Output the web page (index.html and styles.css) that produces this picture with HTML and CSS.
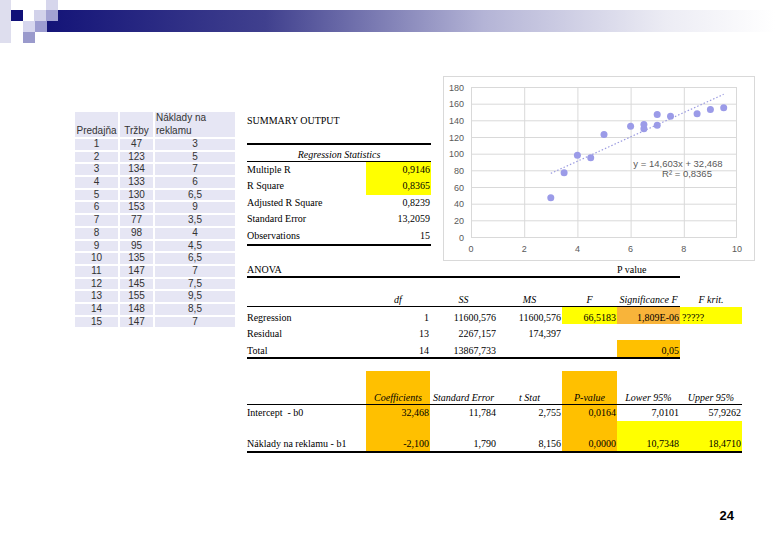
FILE: index.html
```html
<!DOCTYPE html>
<html>
<head>
<meta charset="utf-8">
<link rel="stylesheet" href="styles.css">
</head>
<body>
<svg class="deco" width="780" height="45" viewBox="0 0 780 45">
  <defs>
    <linearGradient id="bar" gradientUnits="userSpaceOnUse" x1="47" y1="0" x2="775" y2="0">
      <stop offset="0" stop-color="#141478"/>
      <stop offset="0.3" stop-color="#40408e"/>
      <stop offset="0.6" stop-color="#b4b4d6"/>
      <stop offset="0.85" stop-color="#ececf4"/>
      <stop offset="1" stop-color="#ffffff"/>
    </linearGradient>
  </defs>
  <rect x="0" y="0" width="11" height="43" fill="#dedeee"/>
  <rect x="47" y="10" width="728" height="22" fill="url(#bar)"/>
  <rect x="11" y="10" width="12" height="11" fill="#101078"/>
  <rect x="34" y="10" width="12" height="11" fill="#d2d2ea"/>
  <rect x="46" y="10" width="12" height="11" fill="#a2a2d2"/>
  <rect x="46" y="0" width="12" height="10" fill="#d6d6ec"/>
  <rect x="23" y="21" width="12" height="11" fill="#d6d6ee"/>
  <rect x="35" y="21" width="12" height="11" fill="#9c9cd0"/>
  <rect x="23" y="32" width="12" height="11" fill="#9a9acc"/>
</svg>

<div class="main">
  <div class="stores">
    <div class="hc">Predajňa</div>
    <div class="hc">Tržby</div>
    <div class="hc hl">Náklady na<br>reklamu</div>
    <div>1</div><div>47</div><div>3</div>
    <div>2</div><div>123</div><div>5</div>
    <div>3</div><div>134</div><div>7</div>
    <div>4</div><div>133</div><div>6</div>
    <div>5</div><div>130</div><div>6,5</div>
    <div>6</div><div>153</div><div>9</div>
    <div>7</div><div>77</div><div>3,5</div>
    <div>8</div><div>98</div><div>4</div>
    <div>9</div><div>95</div><div>4,5</div>
    <div>10</div><div>135</div><div>6,5</div>
    <div>11</div><div>147</div><div>7</div>
    <div>12</div><div>145</div><div>7,5</div>
    <div>13</div><div>155</div><div>9,5</div>
    <div>14</div><div>148</div><div>8,5</div>
    <div>15</div><div>147</div><div>7</div>
  </div>

  <div class="output">
    <div class="top">
      <div class="summary">
        <div class="title">SUMMARY OUTPUT</div>
        <div class="stats">
          <div class="stats-head">Regression Statistics</div>
          <div class="stat-row"><span class="lbl">Multiple R</span><span class="val yellow">0,9146</span></div>
          <div class="stat-row"><span class="lbl">R Square</span><span class="val yellow">0,8365</span></div>
          <div class="stat-row"><span class="lbl">Adjusted R Square</span><span class="val">0,8239</span></div>
          <div class="stat-row"><span class="lbl">Standard Error</span><span class="val">13,2059</span></div>
          <div class="stat-row"><span class="lbl">Observations</span><span class="val">15</span></div>
        </div>
      </div>
      <div class="chart">
        <svg width="312" height="185" viewBox="0 0 312 185">
          <rect x="0.5" y="0.5" width="311" height="184" fill="#fff" stroke="#d9d9d9"/>
          <g stroke="#d9d9d9" stroke-width="1">
            <line x1="28" y1="11.5" x2="294" y2="11.5"/>
            <line x1="28" y1="28.2" x2="294" y2="28.2"/>
            <line x1="28" y1="44.8" x2="294" y2="44.8"/>
            <line x1="28" y1="61.5" x2="294" y2="61.5"/>
            <line x1="28" y1="78.2" x2="294" y2="78.2"/>
            <line x1="28" y1="94.8" x2="294" y2="94.8"/>
            <line x1="28" y1="111.5" x2="294" y2="111.5"/>
            <line x1="28" y1="128.2" x2="294" y2="128.2"/>
            <line x1="28" y1="144.8" x2="294" y2="144.8"/>
            <line x1="28" y1="161.5" x2="294" y2="161.5"/>
            <line x1="28.5" y1="11" x2="28.5" y2="161"/>
            <line x1="81.7" y1="11" x2="81.7" y2="161"/>
            <line x1="134.9" y1="11" x2="134.9" y2="161"/>
            <line x1="188.1" y1="11" x2="188.1" y2="161"/>
            <line x1="241.3" y1="11" x2="241.3" y2="161"/>
            <line x1="293.5" y1="11" x2="293.5" y2="161"/>
          </g>
          <g class="ax" text-anchor="end">
            <text x="21" y="14.5">180</text>
            <text x="21" y="31.2">160</text>
            <text x="21" y="47.8">140</text>
            <text x="21" y="64.5">120</text>
            <text x="21" y="81.2">100</text>
            <text x="21" y="97.8">80</text>
            <text x="21" y="114.5">60</text>
            <text x="21" y="131.2">40</text>
            <text x="21" y="147.8">20</text>
            <text x="21" y="164.5">0</text>
          </g>
          <g class="ax" text-anchor="middle">
            <text x="28" y="175.5">0</text>
            <text x="81.2" y="175.5">2</text>
            <text x="134.4" y="175.5">4</text>
            <text x="187.6" y="175.5">6</text>
            <text x="240.8" y="175.5">8</text>
            <text x="294" y="175.5">10</text>
          </g>
          <g fill="#9b9be8">
            <circle cx="107.8" cy="121.8" r="3.5"/>
            <circle cx="161" cy="58.5" r="3.5"/>
            <circle cx="214.2" cy="49.3" r="3.5"/>
            <circle cx="187.6" cy="50.2" r="3.5"/>
            <circle cx="200.9" cy="52.7" r="3.5"/>
            <circle cx="267.4" cy="33.5" r="3.5"/>
            <circle cx="121.1" cy="96.8" r="3.5"/>
            <circle cx="134.4" cy="79.3" r="3.5"/>
            <circle cx="147.7" cy="81.8" r="3.5"/>
            <circle cx="200.9" cy="48.5" r="3.5"/>
            <circle cx="214.2" cy="38.5" r="3.5"/>
            <circle cx="227.5" cy="40.2" r="3.5"/>
            <circle cx="280.7" cy="31.8" r="3.5"/>
            <circle cx="254.1" cy="37.7" r="3.5"/>
          </g>
          <line x1="107.8" y1="97.4" x2="280.7" y2="18.3" stroke="#9b9be0" stroke-width="1.2" stroke-dasharray="1.5 2"/>
          <text class="eq" x="235" y="91" text-anchor="middle">y = 14,603x + 32,468</text>
          <text class="eq" x="244" y="101" text-anchor="middle">R² = 0,8365</text>
        </svg>
      </div>
    </div>

    <div class="anova">
      <div class="row title-row">
        <div class="l">ANOVA</div><div></div><div></div><div></div><div></div><div class="l">P value</div>
      </div>
      <div class="row head-row">
        <div></div><div class="c i">df</div><div class="c i">SS</div><div class="c i">MS</div><div class="c i">F</div><div class="c i">Significance F</div><div class="c i">F krit.</div>
      </div>
      <div class="row data-row">
        <div class="l">Regression</div><div class="r">1</div><div class="r">11600,576</div><div class="r">11600,576</div><div class="r yellow">66,5183</div><div class="r orange2">1,809E-06</div><div class="l pad yellow">?????</div>
      </div>
      <div class="row data-row">
        <div class="l">Residual</div><div class="r">13</div><div class="r">2267,157</div><div class="r">174,397</div><div></div><div></div><div></div>
      </div>
      <div class="row data-row last">
        <div class="l">Total</div><div class="r">14</div><div class="r">13867,733</div><div></div><div></div><div class="r orange">0,05</div><div></div>
      </div>
    </div>

    <div class="coef">
      <div class="row chead">
        <div></div><div class="c i orange">Coefficients</div><div class="c i">Standard Error</div><div class="c i">t Stat</div><div class="c i orange">P-value</div><div class="c i">Lower 95%</div><div class="c i">Upper 95%</div>
      </div>
      <div class="row crow">
        <div class="l">Intercept&nbsp; - b0</div><div class="r orange">32,468</div><div class="r">11,784</div><div class="r">2,755</div><div class="r orange">0,0164</div><div class="r">7,0101</div><div class="r">57,9262</div>
      </div>
      <div class="row crow2">
        <div class="l">Náklady na reklamu - b1</div><div class="r orange">-2,100</div><div class="r">1,790</div><div class="r">8,156</div><div class="r orange">0,0000</div><div class="r yellow">10,7348</div><div class="r yellow">18,4710</div>
      </div>
    </div>
  </div>
</div>

<div class="footer">24</div>
</body>
</html>
```

FILE: styles.css
```css
html, body {
  margin: 0;
  padding: 0;
}
body {
  width: 780px;
  height: 540px;
  overflow: hidden;
  background: #fff;
  display: flex;
  flex-direction: column;
  font-family: "Liberation Serif", "Times New Roman", serif;
  font-size: 10px;
  color: #000;
}
.deco {
  display: block;
  flex: none;
}
.main {
  display: flex;
  align-items: flex-start;
  padding: 31px 0 0 75px;
}

/* left data table */
.stores {
  margin-top: 36px;
  display: grid;
  grid-template-columns: 43px 33px 80px;
  grid-template-rows: 25px;
  grid-auto-rows: 10.7px;
  gap: 2px;
  font-family: "Liberation Sans", Arial, sans-serif;
  font-size: 10px;
  color: #333;
}
.stores > div {
  background: #e6e6f4;
  text-align: center;
  line-height: 10.7px;
}
.stores > .hc {
  display: flex;
  align-items: flex-end;
  justify-content: center;
  line-height: 12.5px;
}
.stores > .hl {
  justify-content: flex-start;
  text-align: left;
  padding-left: 1px;
}

/* right part */
.output {
  margin-left: 12px;
  display: flex;
  flex-direction: column;
}
.top {
  display: flex;
  align-items: flex-start;
}
.summary {
  width: 184px;
  padding-top: 38px;
}
.title {
  height: 14px;
  line-height: 14px;
}
.stats {
  margin-top: 15px;
  border-top: 2px solid #000;
  border-bottom: 2px solid #000;
}
.stats-head {
  height: 16px;
  line-height: 13px;
  display: flex;
  align-items: flex-end;
  justify-content: center;
  font-style: italic;
  border-bottom: 1px solid #000;
}
.stat-row {
  display: flex;
  height: 16.4px;
  line-height: 16.4px;
}
.stat-row .lbl {
  width: 119px;
}
.stat-row .val {
  width: 64px;
  padding-right: 1px;
  text-align: right;
}
.yellow {
  background: #ffff00;
}
.orange {
  background: #ffc000;
}
.orange2 {
  background: #f8b43a;
}
.chart {
  margin-left: 12px;
  width: 312px;
  height: 185px;
}
.chart svg {
  display: block;
}
.ax {
  font-family: "Liberation Sans", Arial, sans-serif;
  font-size: 9px;
  fill: #595959;
}
.eq {
  font-family: "Liberation Sans", Arial, sans-serif;
  font-size: 9.5px;
  fill: #595959;
}

/* anova + coefficients grids */
.row {
  display: grid;
  grid-template-columns: 119px 64px 67px 65px 55px 63px 62px;
}
.row > div {
  display: flex;
  align-items: flex-end;
  line-height: 13px;
  white-space: nowrap;
}
.row > .l { justify-content: flex-start; }
.row > .r { justify-content: flex-end; padding-right: 1px; }
.row > .c { justify-content: center; }
.row > .pad { padding-left: 2px; }
.i { font-style: italic; }

.anova {
  width: 433px;
}
.title-row {
  height: 15px;
  border-bottom: 2px solid #000;
}
.head-row {
  height: 28px;
  border-bottom: 1px solid #000;
}
.data-row {
  height: 16.5px;
}
.data-row.last {
  border-bottom: 2px solid #000;
}

.coef {
  width: 495px;
  margin-top: 12px;
}
.chead {
  height: 33px;
  border-bottom: 1px solid #000;
}
.crow {
  height: 16px;
}
.crow > div {
  align-items: center;
}
.crow2 {
  height: 30px;
  border-bottom: 2px solid #000;
}
.crow2 > div {
  padding-bottom: 1px;
}

.footer {
  margin-top: auto;
  padding: 0 46px 17px 0;
  text-align: right;
  font-family: "Liberation Sans", Arial, sans-serif;
  font-weight: bold;
  font-size: 13px;
  line-height: 14px;
}
```
